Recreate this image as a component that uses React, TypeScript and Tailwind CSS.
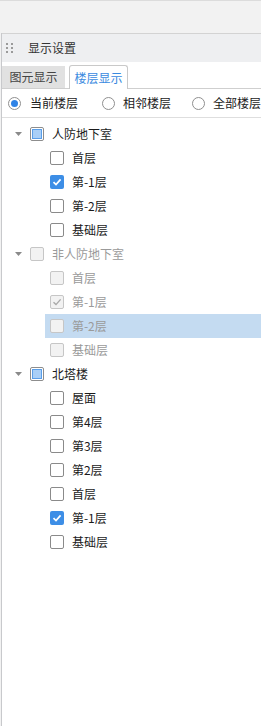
import React from "react";

type Node = { label: string; state: "none" | "checked" | "partial"; sel?: boolean };
type Group = { label: string; state: "none" | "partial"; disabled?: boolean; items: Node[] };

const groups: Group[] = [
  {
    label: "人防地下室",
    state: "partial",
    items: [
      { label: "首层", state: "none" },
      { label: "第-1层", state: "checked" },
      { label: "第-2层", state: "none" },
      { label: "基础层", state: "none" },
    ],
  },
  {
    label: "非人防地下室",
    state: "none",
    disabled: true,
    items: [
      { label: "首层", state: "none" },
      { label: "第-1层", state: "checked" },
      { label: "第-2层", state: "none", sel: true },
      { label: "基础层", state: "none" },
    ],
  },
  {
    label: "北塔楼",
    state: "partial",
    items: [
      { label: "屋面", state: "none" },
      { label: "第4层", state: "none" },
      { label: "第3层", state: "none" },
      { label: "第2层", state: "none" },
      { label: "首层", state: "none" },
      { label: "第-1层", state: "checked" },
      { label: "基础层", state: "none" },
    ],
  },
];

function Box({ state, disabled }: { state: string; disabled?: boolean }) {
  if (disabled) {
    return (
      <span className="w-[14px] h-[14px] rounded-[2px] border border-[#c6c6c6] bg-[#f2f2f2] flex items-center justify-center shrink-0">
        {state === "checked" && (
          <svg width="10" height="10" viewBox="0 0 10 10">
            <path d="M1.5 5.2 L4 7.6 L8.6 2.4" fill="none" stroke="#a8a8a8" strokeWidth="1.4" />
          </svg>
        )}
      </span>
    );
  }
  if (state === "checked") {
    return (
      <span className="w-[14px] h-[14px] rounded-[2px] bg-[#3d8ee6] flex items-center justify-center shrink-0">
        <svg width="10" height="10" viewBox="0 0 10 10">
          <path d="M1.5 5.2 L4 7.6 L8.6 2.4" fill="none" stroke="#fff" strokeWidth="1.7" />
        </svg>
      </span>
    );
  }
  if (state === "partial") {
    return (
      <span className="w-[14px] h-[14px] rounded-[2px] border border-[#8d8d8d] bg-white flex items-center justify-center shrink-0">
        <span className="w-[10px] h-[10px] bg-[#a9cff7] border border-[#5a9ee8]" />
      </span>
    );
  }
  return <span className="w-[14px] h-[14px] rounded-[2px] border border-[#8a8a8a] bg-white shrink-0" />;
}

function Radio({ on }: { on?: boolean }) {
  return (
    <span className="w-[13px] h-[13px] rounded-full border border-[#8f8f8f] bg-white flex items-center justify-center shrink-0">
      {on && <span className="w-[7px] h-[7px] rounded-full bg-[#2f83e6]" />}
    </span>
  );
}

export default function App() {
  return (
    <div
      className="w-[261px] h-[726px] bg-white overflow-hidden flex flex-col text-[12px] text-[#1a1a1a]"
      style={{ fontFamily: '"Microsoft YaHei", "Noto Sans CJK SC", sans-serif' }}
    >
      {/* top toolbar area */}
      <div className="h-[33px] bg-[#f2f2f2] border-t border-[#dcdcdc] shrink-0" />
      <div className="flex flex-1 min-h-0">
        <div className="w-[3px] bg-[#f2f2f2]" />
        <div className="w-[3px] bg-[#c8c9cc]" />
        <div className="flex-1 flex flex-col border-t border-[#d3d3d3]">
          {/* panel header */}
          <div className="h-[28px] bg-[#eeeff1] flex items-center pl-[4px]">
            <div className="grid grid-cols-2 gap-x-[3px] gap-y-[2px]">
              {[0, 1, 2, 3, 4, 5].map((i) => (
                <span key={i} className="w-[2px] h-[2px] bg-[#9a9a9a]" />
              ))}
            </div>
            <span className="ml-[15px] text-[#333]">显示设置</span>
          </div>
          {/* tabs */}
          <div className="h-[27px] flex items-end border-b border-[#cfcfcf] pt-[3px]">
            <div className="w-[63px] h-[22px] bg-[#e1e1e1] text-[#444] flex items-center justify-center">图元显示</div>
            <div className="ml-[4px] w-[59px] h-[24px] -mb-px bg-white border border-b-0 border-[#c9c9c9] rounded-t-[3px] text-[#3a8ae0] flex items-center justify-center">
              楼层显示
            </div>
          </div>
          {/* radios */}
          <div className="h-[29px] flex items-center border-b border-[#dedede] pl-[6px] whitespace-nowrap">
            <Radio on />
            <span className="ml-[9px]">当前楼层</span>
            <span className="ml-[24px]"><Radio /></span>
            <span className="ml-[8px]">相邻楼层</span>
            <span className="ml-[21px]"><Radio /></span>
            <span className="ml-[8px]">全部楼层</span>
          </div>
          {/* tree */}
          <div className="pt-[4px] flex flex-col">
            {groups.map((g) => (
              <div key={g.label} className="flex flex-col">
                <div className="h-[24px] flex items-center pl-[13px]">
                  <svg width="7" height="4" viewBox="0 0 7 4" className="shrink-0">
                    <path d="M0 0 L7 0 L3.5 4 Z" fill="#8a8a8a" />
                  </svg>
                  <span className="ml-[8px]">
                    <Box state={g.state} disabled={g.disabled} />
                  </span>
                  <span className={`ml-[8px] ${g.disabled ? "text-[#9a9a9a]" : ""}`}>{g.label}</span>
                </div>
                {g.items.map((it, i) => (
                  <div key={i} className={`h-[24px] flex items-center ml-[43px] pl-[5px] ${it.sel ? "bg-[#c4dbf1]" : ""}`}>
                    <Box state={it.state} disabled={g.disabled} />
                    <span className={`ml-[8px] ${g.disabled ? "text-[#9a9a9a]" : ""}`}>{it.label}</span>
                  </div>
                ))}
              </div>
            ))}
          </div>
        </div>
      </div>
    </div>
  );
}
